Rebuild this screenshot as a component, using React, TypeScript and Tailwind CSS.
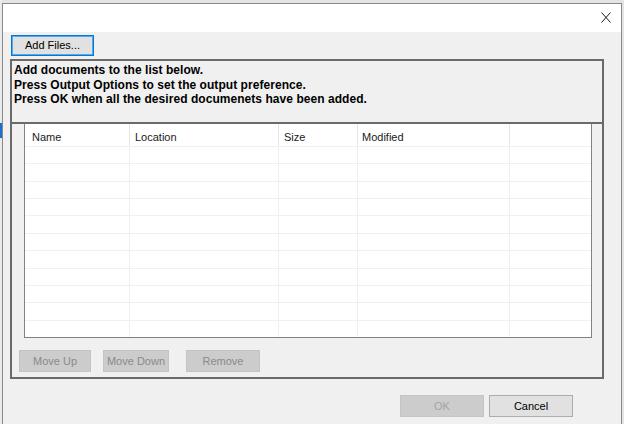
import React from "react";

const cols = [
  { label: "Name", w: "w-[105px]", pl: "pl-[7px]" },
  { label: "Location", w: "w-[149px]", pl: "pl-[5px]" },
  { label: "Size", w: "w-[79px]", pl: "pl-[5px]" },
  { label: "Modified", w: "w-[152px]", pl: "pl-[4px]" },
  { label: "", w: "flex-1", pl: "pl-[4px]" },
];

const rows = Array.from({ length: 11 }, (_, i) => i);

function DisabledButton({ label, w }: { label: string; w: string }) {
  return (
    <div
      className={`${w} h-[22px] flex items-center justify-center bg-[#cccccc] border border-[#c4c4c4] text-[#8a8a8a] text-[11px]`}
    >
      {label}
    </div>
  );
}

export default function App() {
  return (
    <div
      className="w-[624px] h-[424px] overflow-hidden flex bg-[#e4e4e4] pt-[3px]"
      style={{ fontFamily: '"Liberation Sans", Arial, sans-serif' }}
    >
      {/* outside strip */}
      <div className="w-[2px] -mt-[3px] flex flex-col bg-[#eaeaea]">
        <div className="mt-[123px] h-[15px] bg-[#1a6fd0]" />
      </div>

      {/* window */}
      <div className="w-[620px] flex flex-col border-l border-t border-r border-[#8a8a8a] bg-[#f0f0f0]">
        {/* title bar */}
        <div className="h-[28px] bg-white flex justify-end items-start pt-[8px] pr-[10px] shrink-0">
          <svg width="10" height="11" viewBox="0 0 10 11" className="block">
            <path d="M0.5 0.5 L9.5 10.5 M9.5 0.5 L0.5 10.5" stroke="#1a1a1a" strokeWidth="1" fill="none" />
          </svg>
        </div>

        {/* Add Files button */}
        <div className="pl-[8px] mt-[3px]">
          <div className="w-[83px] h-[21px] flex items-center justify-center bg-[#e1e1e1] border border-[#0078d7] shadow-[inset_0_0_0_1px_#5aa7e8] text-[11px] text-black">
            Add Files...
          </div>
        </div>

        {/* group box */}
        <div className="ml-[7px] mt-[3px] w-[594px] h-[320px] border-2 border-[#6a6a6a] flex flex-col">
          {/* instructions */}
          <div className="h-[63px] border-b-2 border-[#6a6a6a] pl-[2px] pt-[2px] text-[12px] font-bold leading-[14.5px] tracking-[0.05px] text-black shrink-0">
            <div>Add documents to the list below.</div>
            <div>Press Output Options to set the output preference.</div>
            <div>Press OK when all the desired documenets have been added.</div>
          </div>

          {/* list view */}
          <div className="ml-[12px] w-[568px] h-[214px] border-l border-r border-b border-[#828282] bg-white flex flex-col shrink-0">
            {/* header */}
            <div className="h-[23px] flex border-b border-[#f0f0f0] shrink-0">
              {cols.map((c, i) => (
                <div
                  key={i}
                  className={`${c.w} ${c.pl} h-full flex items-center pt-[4px] text-[11px] text-[#1a1a1a] ${i < cols.length - 1 ? "border-r border-[#e5e5e5]" : ""}`}
                >
                  {c.label}
                </div>
              ))}
            </div>
            {/* rows */}
            <div className="flex-1 flex flex-col">
              {rows.map((r) => (
                <div
                  key={r}
                  className={`flex-1 flex ${r < rows.length - 1 ? "border-b border-[#f0f0f0]" : ""}`}
                >
                  {cols.map((c, i) => (
                    <div
                      key={i}
                      className={`${c.w} h-full ${i < cols.length - 1 ? "border-r border-[#f0f0f0]" : ""}`}
                    />
                  ))}
                </div>
              ))}
            </div>
          </div>

          {/* move buttons */}
          <div className="flex mt-[12px] ml-[7px]">
            <DisabledButton label="Move Up" w="w-[72px]" />
            <div className="ml-[12px]">
              <DisabledButton label="Move Down" w="w-[66px]" />
            </div>
            <div className="ml-[17px]">
              <DisabledButton label="Remove" w="w-[74px]" />
            </div>
          </div>
        </div>

        {/* OK / Cancel */}
        <div className="flex justify-end gap-[5px] pr-[48px] mt-[16px]">
          <div className="w-[84px] h-[22px] flex items-center justify-center bg-[#cccccc] border border-[#c4c4c4] text-[#a3a3a3] text-[11px]">
            OK
          </div>
          <div className="w-[84px] h-[22px] flex items-center justify-center bg-[#e1e1e1] border border-[#adadad] text-black text-[11px]">
            Cancel
          </div>
        </div>
      </div>
    </div>
  );
}
